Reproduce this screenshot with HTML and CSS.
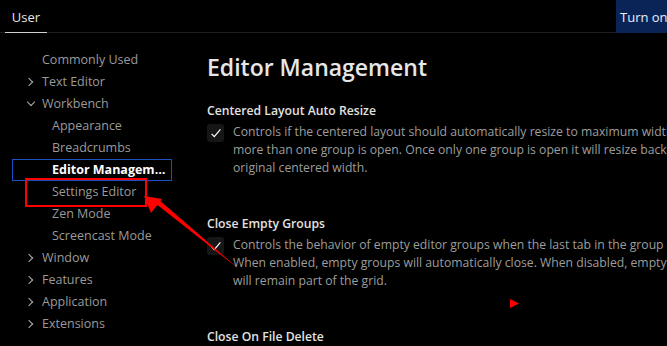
FILE: index.html
```html
<!DOCTYPE html>
<html lang="en">
<head>
    <meta charset="UTF-8">
    <title>Settings</title>
    <link rel="stylesheet" href="styles.css">
</head>
<body>
    <div class="tabbar">
        <div class="tab active">User</div>
        <button class="turn-on">Turn on</button>
    </div>

    <div class="main">
        <ul class="tree">
            <li class="row l1">Commonly Used</li>
            <li class="row l1 closed">Text Editor</li>
            <li class="row l1 open">Workbench</li>
            <li class="row l2">Appearance</li>
            <li class="row l2">Breadcrumbs</li>
            <li class="row l2 selected">Editor Management</li>
            <li class="row l2">Settings Editor</li>
            <li class="row l2">Zen Mode</li>
            <li class="row l2">Screencast Mode</li>
            <li class="row l1 closed">Window</li>
            <li class="row l1 closed">Features</li>
            <li class="row l1 closed">Application</li>
            <li class="row l1 closed">Extensions</li>
        </ul>

        <div class="content">
            <h1>Editor Management</h1>

            <div class="setting">
                <div class="setting-title">Centered Layout Auto Resize</div>
                <div class="setting-body">
                    <span class="checkbox"><svg viewBox="0 0 16 16" width="16" height="16"><path d="M3.6 8.8 L6.3 11.6 L12.4 4.4" fill="none" stroke="#fff" stroke-width="1.2"/></svg></span>
                    <p class="desc">Controls if the centered layout should automatically resize to maximum width when<br>more than one group is open. Once only one group is open it will resize back to the<br>original centered width.</p>
                </div>
            </div>

            <div class="setting">
                <div class="setting-title">Close Empty Groups</div>
                <div class="setting-body">
                    <span class="checkbox"><svg viewBox="0 0 16 16" width="16" height="16"><path d="M3.6 8.8 L6.3 11.6 L12.4 4.4" fill="none" stroke="#fff" stroke-width="1.2"/></svg></span>
                    <p class="desc">Controls the behavior of empty editor groups when the last tab in the group is closed.<br>When enabled, empty groups will automatically close. When disabled, empty groups<br>will remain part of the grid.</p>
                </div>
            </div>

            <div class="setting">
                <div class="setting-title">Close On File Delete</div>
            </div>
        </div>
    </div>

    <!-- annotation drawn over the screenshot -->
    <div class="mark-box"></div>
    <svg class="mark-arrow" width="667" height="346" viewBox="0 0 667 346">
        <polygon points="240,270 155,203 158,199" fill="#f00"/>
        <polygon points="144,196 162,199 151,213" fill="#f00"/>
        <polygon points="510,299 519,303.5 510,308" fill="#f00"/>
    </svg>
</body>
</html>
```

FILE: styles.css
```css
:root {
    --bg: #000;
    --tree-text: #9a9a9a;
    --desc-text: #9d9d9d;
    --title-text: #e2e2e2;
    --focus-blue: #1c4fbf;
    --mark-red: #f00;
}

body {
    margin: 0;
    width: 667px;
    height: 346px;
    overflow: hidden;
    background-color: var(--bg);
    font-family: 'Open Sans', 'Noto Sans', sans-serif;
    font-size: 12.5px;
    color: var(--tree-text);
    position: relative;
}

.tabbar {
    display: flex;
    justify-content: space-between;
    height: 32px;
    border-bottom: 1px solid #1e1e1e;
}

.tab {
    margin-left: 5px;
    width: 42px;
    text-align: center;
    line-height: 34px;
    color: #e6e6e6;
    font-size: 13px;
    border-bottom: 1px solid #d0d0d0;
    margin-bottom: -1px;
}

.turn-on {
    width: 51px;
    height: 33px;
    border: none;
    padding: 0 0 0 4px;
    background-color: #0a2458;
    color: #e8eef8;
    font-family: inherit;
    font-size: 13px;
    text-align: left;
    white-space: nowrap;
    overflow: hidden;
}

.main {
    display: grid;
    grid-template-columns: 207px 1fr;
    height: 313px;
    overflow: hidden;
}

.tree {
    list-style: none;
    margin: 0;
    padding: 16px 0 0 0;
}

.row {
    height: 22px;
    line-height: 22px;
    white-space: nowrap;
    overflow: hidden;
    text-overflow: ellipsis;
    position: relative;
    box-sizing: border-box;
}

.l1 {
    padding-left: 42px;
}

.l2 {
    padding-left: 52px;
}

.closed::before,
.open::before {
    content: "";
    position: absolute;
    width: 5px;
    height: 5px;
    border-right: 1px solid #b0b0b0;
    border-bottom: 1px solid #b0b0b0;
}

.closed::before {
    left: 26px;
    top: 8px;
    transform: rotate(-45deg);
}

.open::before {
    left: 28px;
    top: 6px;
    transform: rotate(45deg);
}

.selected {
    margin-left: 12px;
    width: 160px;
    padding-left: 39px;
    padding-right: 5px;
    border: 1px solid var(--focus-blue);
    line-height: 20px;
    color: #fff;
    font-weight: 700;
}

.content {
    padding-top: 19px;
    overflow: hidden;
    white-space: nowrap;
}

h1 {
    margin: 0 0 20px 0;
    font-size: 23px;
    font-weight: 600;
    line-height: 30px;
    color: #e6e6e6;
}

.setting {
    height: 113px;
}

.setting-title {
    font-size: 12.2px;
    line-height: 18px;
    font-weight: 600;
    color: var(--title-text);
    margin-bottom: 3px;
}

.setting-body {
    display: flex;
    gap: 9px;
}

.checkbox {
    flex: none;
    width: 17px;
    height: 18px;
    margin-top: 1px;
    border-radius: 3px;
    background-color: #161616;
    display: flex;
    align-items: center;
    justify-content: center;
}

.desc {
    margin: 0;
    flex: none;
    font-size: 12.2px;
    line-height: 18px;
    color: var(--desc-text);
}

.mark-box {
    position: absolute;
    left: 25px;
    top: 178px;
    width: 118px;
    height: 25px;
    border: 2px solid var(--mark-red);
}

.mark-arrow {
    position: absolute;
    left: 0;
    top: 0;
}
```
